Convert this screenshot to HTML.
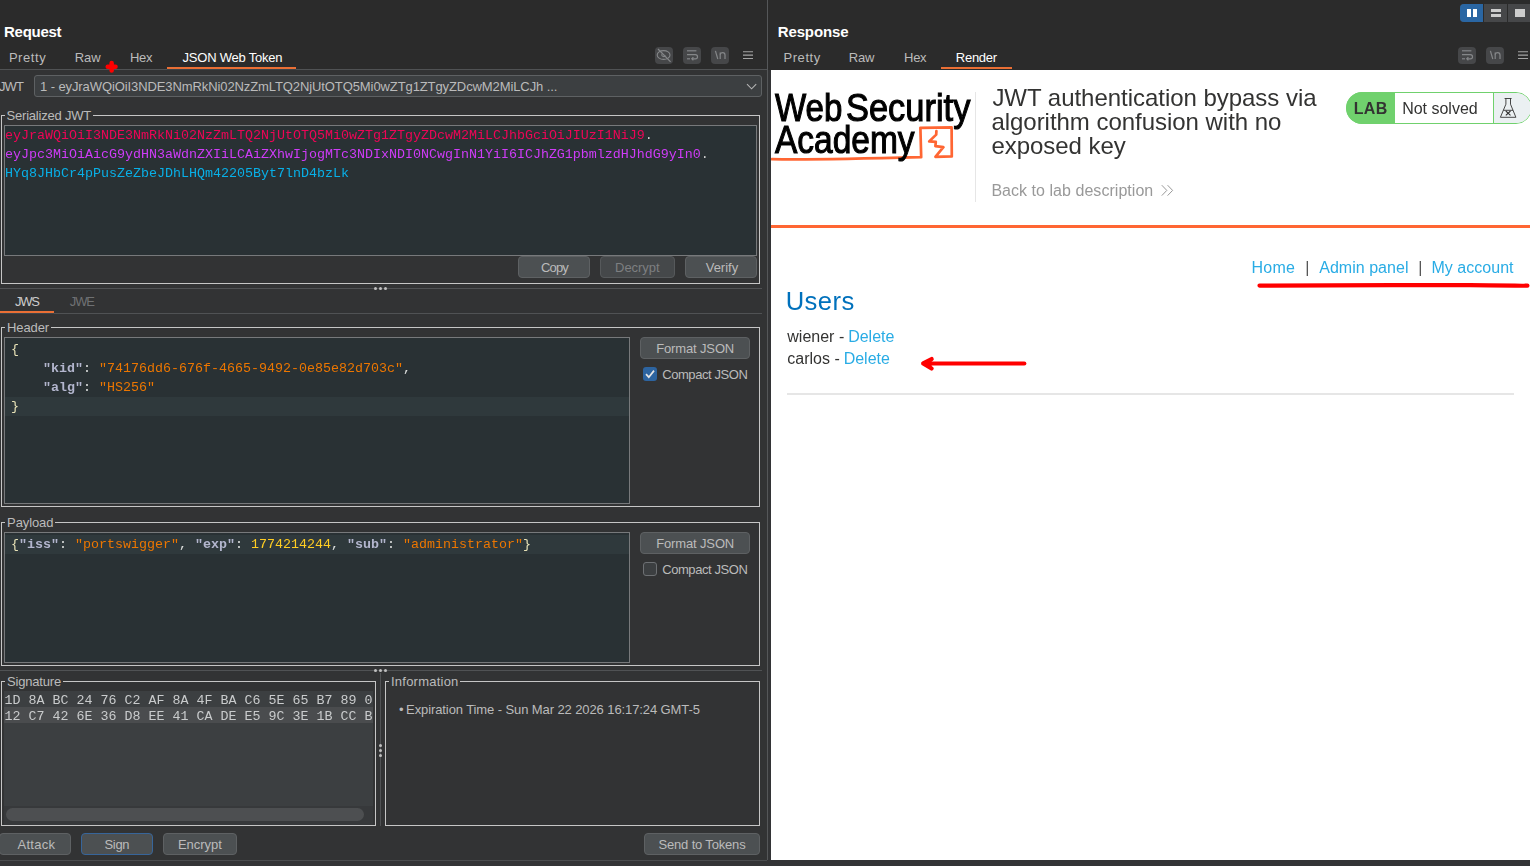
<!DOCTYPE html>
<html><head><meta charset="utf-8"><title>Burp</title>
<style>html,body{margin:0;padding:0;background:#2b2b2b;}body{width:1530px;height:866px;position:relative;overflow:hidden;font-family:"Liberation Sans",sans-serif;}</style></head>
<body>
<div style="position:absolute;left:0px;top:0px;width:1530px;height:866px;box-sizing:border-box;background:#2b2b2b;"></div>
<div style="position:absolute;left:0px;top:70px;width:767px;height:796px;box-sizing:border-box;background:#323334;"></div>
<div style="position:absolute;left:768px;top:70px;width:3px;height:790px;box-sizing:border-box;background:#333436;"></div>
<div style="position:absolute;left:0px;top:69px;width:767px;height:1px;box-sizing:border-box;background:#505254;"></div>
<div style="position:absolute;left:767px;top:0px;width:1px;height:860px;box-sizing:border-box;background:#555759;"></div>
<div style="position:absolute;left:0px;top:860px;width:1530px;height:6px;box-sizing:border-box;background:#333436;"></div>
<div style="position:absolute;left:0px;top:860px;width:767px;height:1px;box-sizing:border-box;background:#4a4c4e;"></div>
<div style="position:absolute;left:167px;top:67px;width:129px;height:2px;box-sizing:border-box;background:#ea6f35;"></div>
<div style="position:absolute;left:167px;top:69px;width:129px;height:1px;box-sizing:border-box;background:#3e4449;"></div>
<svg style="position:absolute;left:100px;top:56px" width="24" height="22" viewBox="100 56 24 22"><path d="M111.65 62.9 V70.5 M107.7 66.65 H115.5" stroke="#ff0000" stroke-width="4.5" stroke-linecap="round" fill="none"/></svg>
<div style="position:absolute;left:655px;top:47px;width:18px;height:17px;box-sizing:border-box;background:#464749;border-radius:4px;"></div>
<div style="position:absolute;left:683px;top:47px;width:18px;height:17px;box-sizing:border-box;background:#464749;border-radius:4px;"></div>
<div style="position:absolute;left:711px;top:47px;width:18px;height:17px;box-sizing:border-box;background:#464749;border-radius:4px;"></div>
<svg style="position:absolute;left:655px;top:47px" width="18" height="17" viewBox="0 0 18 17"><g fill="none" stroke="#858789" stroke-width="1.1"><ellipse cx="8.6" cy="8" rx="6.4" ry="4.4"/><path d="M6.6 7.2 C6.6 9.8 9.6 10.2 10.4 8.6"/><path d="M3 2 L15.6 14.8" stroke-width="1.2"/></g></svg>
<svg style="position:absolute;left:683px;top:47px" width="18" height="17" viewBox="0 0 18 17"><g fill="none" stroke="#858789" stroke-width="1.2"><path d="M4 3.8 H13.4"/><path d="M4 7.6 H12.4 C15.2 7.6 15.2 11.8 12.4 11.8 H9"/><path d="M10.4 10.3 L8.8 11.8 L10.4 13.3"/><path d="M4 11.8 H7"/></g></svg>
<svg style="position:absolute;left:711px;top:47px" width="18" height="17" viewBox="0 0 18 17"><g fill="none" stroke="#858789" stroke-width="1.2"><path d="M4.4 3.8 L6.8 12"/><path d="M9.2 12 V5.6"/><path d="M9.2 7.6 C9.6 5.2 14 4.8 14 8 V12"/></g></svg>
<svg style="position:absolute;left:741px;top:48px" width="14" height="14" viewBox="741 48 14 14"><path d="M743 51.7 H753 M743 55.1 H753 M743 58.5 H753" stroke="#a4a4a4" stroke-width="1.15" fill="none"/></svg>
<div style="position:absolute;left:34px;top:75px;width:728px;height:22px;box-sizing:border-box;background:#3c3f41;border:1px solid #5e6163;border-radius:3px;"></div>
<svg style="position:absolute;left:745px;top:82px" width="14" height="10" viewBox="0 0 14 10"><path d="M2 2.2 L6.6 6.8 L11.2 2.2" stroke="#b4b4b4" stroke-width="1.1" fill="none"/></svg>
<div style="position:absolute;left:1px;top:115px;width:1px;height:169px;box-sizing:border-box;background:#c6c6c6;"></div><div style="position:absolute;left:759px;top:115px;width:1px;height:169px;box-sizing:border-box;background:#c6c6c6;"></div><div style="position:absolute;left:1px;top:283px;width:759px;height:1px;box-sizing:border-box;background:#c6c6c6;"></div><div style="position:absolute;left:1px;top:115px;width:4px;height:1px;box-sizing:border-box;background:#c6c6c6;"></div><div style="position:absolute;left:93px;top:115px;width:667px;height:1px;box-sizing:border-box;background:#c6c6c6;"></div>
<div style="position:absolute;left:4px;top:125px;width:753px;height:131px;box-sizing:border-box;background:#293134;border:1px solid #77797b;"></div>
<div style="position:absolute;left:518px;top:256px;width:72px;height:22px;box-sizing:border-box;background:#4c5052;border:1px solid #5e6163;border-radius:4px;"></div>
<div style="position:absolute;left:600px;top:256px;width:75px;height:22px;box-sizing:border-box;background:#45484a;border:1px solid #56595b;border-radius:4px;"></div>
<div style="position:absolute;left:685px;top:256px;width:72px;height:22px;box-sizing:border-box;background:#4c5052;border:1px solid #5e6163;border-radius:4px;"></div>
<div style="position:absolute;left:0px;top:288px;width:762px;height:1px;box-sizing:border-box;background:#505254;"></div>
<div style="position:absolute;left:374.0px;top:287.0px;width:3px;height:3px;box-sizing:border-box;background:#c0c0c0;border-radius:2px;"></div><div style="position:absolute;left:379.0px;top:287.0px;width:3px;height:3px;box-sizing:border-box;background:#c0c0c0;border-radius:2px;"></div><div style="position:absolute;left:384.0px;top:287.0px;width:3px;height:3px;box-sizing:border-box;background:#c0c0c0;border-radius:2px;"></div>
<div style="position:absolute;left:0px;top:313px;width:762px;height:1px;box-sizing:border-box;background:#505254;"></div>
<div style="position:absolute;left:0px;top:311px;width:54px;height:2px;box-sizing:border-box;background:#ea6f35;"></div>
<div style="position:absolute;left:0px;top:313px;width:54px;height:1px;box-sizing:border-box;background:#3e4449;"></div>
<div style="position:absolute;left:1px;top:327px;width:1px;height:180px;box-sizing:border-box;background:#c6c6c6;"></div><div style="position:absolute;left:759px;top:327px;width:1px;height:180px;box-sizing:border-box;background:#c6c6c6;"></div><div style="position:absolute;left:1px;top:506px;width:759px;height:1px;box-sizing:border-box;background:#c6c6c6;"></div><div style="position:absolute;left:1px;top:327px;width:4px;height:1px;box-sizing:border-box;background:#c6c6c6;"></div><div style="position:absolute;left:51px;top:327px;width:709px;height:1px;box-sizing:border-box;background:#c6c6c6;"></div>
<div style="position:absolute;left:4px;top:337px;width:626px;height:167px;box-sizing:border-box;background:#293134;border:1px solid #77797b;"></div>
<div style="position:absolute;left:5px;top:397px;width:624px;height:19px;box-sizing:border-box;background:#2f393c;"></div>
<div style="position:absolute;left:640px;top:337px;width:110px;height:22px;box-sizing:border-box;background:#4c5052;border:1px solid #5e6163;border-radius:4px;"></div>
<div style="position:absolute;left:643px;top:367px;width:14px;height:14px;box-sizing:border-box;background:#2d64a0;border-radius:3px;"></div>
<svg style="position:absolute;left:643px;top:367px" width="14" height="14" viewBox="0 0 14 14"><path d="M3 7.2 L5.8 10.2 L11 3.6" stroke="#e6e6e6" stroke-width="1.7" fill="none"/></svg>
<div style="position:absolute;left:1px;top:522px;width:1px;height:144px;box-sizing:border-box;background:#c6c6c6;"></div><div style="position:absolute;left:759px;top:522px;width:1px;height:144px;box-sizing:border-box;background:#c6c6c6;"></div><div style="position:absolute;left:1px;top:665px;width:759px;height:1px;box-sizing:border-box;background:#c6c6c6;"></div><div style="position:absolute;left:1px;top:522px;width:4px;height:1px;box-sizing:border-box;background:#c6c6c6;"></div><div style="position:absolute;left:55px;top:522px;width:705px;height:1px;box-sizing:border-box;background:#c6c6c6;"></div>
<div style="position:absolute;left:4px;top:532px;width:626px;height:131px;box-sizing:border-box;background:#293134;border:1px solid #77797b;"></div>
<div style="position:absolute;left:5px;top:535px;width:624px;height:19px;box-sizing:border-box;background:#2f393c;"></div>
<div style="position:absolute;left:640px;top:532px;width:110px;height:22px;box-sizing:border-box;background:#4c5052;border:1px solid #5e6163;border-radius:4px;"></div>
<div style="position:absolute;left:643px;top:562px;width:14px;height:14px;box-sizing:border-box;background:#3c3f41;border:1px solid #6d7073;border-radius:3px;"></div>
<div style="position:absolute;left:0px;top:670px;width:762px;height:1px;box-sizing:border-box;background:#505254;"></div>
<div style="position:absolute;left:374.0px;top:669.0px;width:3px;height:3px;box-sizing:border-box;background:#c0c0c0;border-radius:2px;"></div><div style="position:absolute;left:379.0px;top:669.0px;width:3px;height:3px;box-sizing:border-box;background:#c0c0c0;border-radius:2px;"></div><div style="position:absolute;left:384.0px;top:669.0px;width:3px;height:3px;box-sizing:border-box;background:#c0c0c0;border-radius:2px;"></div>
<div style="position:absolute;left:380px;top:673px;width:1px;height:153px;box-sizing:border-box;background:#505254;"></div>
<div style="position:absolute;left:379.0px;top:743.8px;width:3px;height:3px;box-sizing:border-box;background:#c0c0c0;border-radius:2px;"></div><div style="position:absolute;left:379.0px;top:748.8px;width:3px;height:3px;box-sizing:border-box;background:#c0c0c0;border-radius:2px;"></div><div style="position:absolute;left:379.0px;top:753.8px;width:3px;height:3px;box-sizing:border-box;background:#c0c0c0;border-radius:2px;"></div>
<div style="position:absolute;left:1px;top:681px;width:1px;height:145px;box-sizing:border-box;background:#c6c6c6;"></div><div style="position:absolute;left:375px;top:681px;width:1px;height:145px;box-sizing:border-box;background:#c6c6c6;"></div><div style="position:absolute;left:1px;top:825px;width:375px;height:1px;box-sizing:border-box;background:#c6c6c6;"></div><div style="position:absolute;left:1px;top:681px;width:4px;height:1px;box-sizing:border-box;background:#c6c6c6;"></div><div style="position:absolute;left:63px;top:681px;width:313px;height:1px;box-sizing:border-box;background:#c6c6c6;"></div>
<div style="position:absolute;left:4px;top:691px;width:369px;height:115px;box-sizing:border-box;background:#3c3f41;"></div>
<div style="position:absolute;left:4px;top:707px;width:369px;height:16px;box-sizing:border-box;background:#4a4c4e;"></div>
<div style="position:absolute;left:4px;top:806px;width:369px;height:19px;box-sizing:border-box;background:#37393b;"></div>
<div style="position:absolute;left:6px;top:808px;width:358px;height:13px;box-sizing:border-box;background:#4d4f51;border-radius:7px;"></div>
<div style="position:absolute;left:385px;top:681px;width:1px;height:145px;box-sizing:border-box;background:#c6c6c6;"></div><div style="position:absolute;left:759px;top:681px;width:1px;height:145px;box-sizing:border-box;background:#c6c6c6;"></div><div style="position:absolute;left:385px;top:825px;width:375px;height:1px;box-sizing:border-box;background:#c6c6c6;"></div><div style="position:absolute;left:385px;top:681px;width:4px;height:1px;box-sizing:border-box;background:#c6c6c6;"></div><div style="position:absolute;left:460px;top:681px;width:300px;height:1px;box-sizing:border-box;background:#c6c6c6;"></div>
<div style="position:absolute;left:-1px;top:833px;width:72px;height:22px;box-sizing:border-box;background:#4c5052;border:1px solid #5e6163;border-radius:4px;"></div>
<div style="position:absolute;left:81px;top:833px;width:72px;height:22px;box-sizing:border-box;background:#4c5052;border:1px solid #37659a;border-radius:4px;"></div>
<div style="position:absolute;left:163px;top:833px;width:74px;height:22px;box-sizing:border-box;background:#4c5052;border:1px solid #5e6163;border-radius:4px;"></div>
<div style="position:absolute;left:644px;top:833px;width:116px;height:22px;box-sizing:border-box;background:#4c5052;border:1px solid #5e6163;border-radius:4px;"></div>
<div style="position:absolute;left:771px;top:70px;width:759px;height:790px;box-sizing:border-box;background:#ffffff;"></div>
<div style="position:absolute;left:1460px;top:4px;width:70px;height:18px;box-sizing:border-box;background:#464749;border-radius:4px;border-top-right-radius:0;border-bottom-right-radius:0;"></div>
<div style="position:absolute;left:1460px;top:4px;width:23px;height:18px;box-sizing:border-box;background:#2a66a3;border-radius:4px;border-top-right-radius:0;border-bottom-right-radius:0;"></div>
<div style="position:absolute;left:1483px;top:4px;width:1px;height:18px;box-sizing:border-box;background:#2b2b2b;"></div>
<div style="position:absolute;left:1507px;top:4px;width:1px;height:18px;box-sizing:border-box;background:#2b2b2b;"></div>
<div style="position:absolute;left:1467px;top:9px;width:4px;height:8px;box-sizing:border-box;background:#fff;"></div>
<div style="position:absolute;left:1473px;top:9px;width:4px;height:8px;box-sizing:border-box;background:#fff;"></div>
<div style="position:absolute;left:1491px;top:9px;width:10px;height:3px;box-sizing:border-box;background:#cdcdcd;"></div>
<div style="position:absolute;left:1491px;top:14px;width:10px;height:3px;box-sizing:border-box;background:#cdcdcd;"></div>
<div style="position:absolute;left:1515px;top:9px;width:10px;height:8px;box-sizing:border-box;background:#cdcdcd;"></div>
<div style="position:absolute;left:1458px;top:47px;width:18px;height:17px;box-sizing:border-box;background:#464749;border-radius:4px;"></div>
<div style="position:absolute;left:1486px;top:47px;width:18px;height:17px;box-sizing:border-box;background:#464749;border-radius:4px;"></div>
<svg style="position:absolute;left:1458px;top:47px" width="18" height="17" viewBox="0 0 18 17"><g fill="none" stroke="#858789" stroke-width="1.2"><path d="M4 3.8 H13.4"/><path d="M4 7.6 H12.4 C15.2 7.6 15.2 11.8 12.4 11.8 H9"/><path d="M10.4 10.3 L8.8 11.8 L10.4 13.3"/><path d="M4 11.8 H7"/></g></svg>
<svg style="position:absolute;left:1486px;top:47px" width="18" height="17" viewBox="0 0 18 17"><g fill="none" stroke="#858789" stroke-width="1.2"><path d="M4.4 3.8 L6.8 12"/><path d="M9.2 12 V5.6"/><path d="M9.2 7.6 C9.6 5.2 14 4.8 14 8 V12"/></g></svg>
<svg style="position:absolute;left:1516px;top:48px" width="14" height="14" viewBox="1516 48 14 14"><path d="M1518 51.7 H1528 M1518 55.1 H1528 M1518 58.5 H1528" stroke="#a4a4a4" stroke-width="1.15" fill="none"/></svg>
<div style="position:absolute;left:941px;top:67px;width:71px;height:2px;box-sizing:border-box;background:#ea6f35;"></div>
<div style="position:absolute;left:975px;top:92px;width:1px;height:110px;box-sizing:border-box;background:#e6e6e6;"></div>
<div style="position:absolute;left:1346px;top:92px;width:186px;height:32px;box-sizing:border-box;background:#ffffff;border:1px solid #70d16d;border-radius:16px;"></div>
<div style="position:absolute;left:1346px;top:92px;width:49px;height:32px;box-sizing:border-box;background:#70d16d;border-radius:16px 0 0 16px;"></div>
<div style="position:absolute;left:1493px;top:93px;width:38px;height:30px;box-sizing:border-box;background:#ebf0f2;border-radius:0 15px 15px 0;border-left:1px solid #70d16d;"></div>
<svg style="position:absolute;left:1498px;top:96px" width="20" height="24" viewBox="0 0 20 24"><g fill="none" stroke="#333" stroke-width="0.9"><path d="M6.6 2.5 H13.6 M7.9 2.5 V8.2 L2.4 21.3 H17.9 L12.5 8.2 V2.5"/><path d="M5.4 14.3 H15"/><path d="M7.8 15 L12.5 19.4 M12.5 15 L7.8 19.4" stroke-width="1.1"/></g></svg>
<div style="position:absolute;left:771px;top:225px;width:759px;height:3px;box-sizing:border-box;background:#ff6633;"></div>
<svg style="position:absolute;left:1160px;top:184px" width="16" height="13" viewBox="0 0 16 13"><path d="M1.8 1.2 L6.8 6.4 L1.8 11.6 M7.6 1.2 L12.6 6.4 L7.6 11.6" stroke="#999" stroke-width="1" fill="none"/></svg>
<svg style="position:absolute;left:1250px;top:278px" width="280" height="14" viewBox="1250 278 280 14"><path d="M1259.5 285.6 C1300 285.2 1400 284.8 1470 285.2 S1515 286 1527.4 285.6" stroke="#ff0000" stroke-width="4.2" stroke-linecap="round" fill="none"/></svg>
<svg style="position:absolute;left:915px;top:350px" width="120" height="26" viewBox="915 350 120 26"><path d="M926 363.5 L1024.3 363.5" stroke="#ff0000" stroke-width="4.2" stroke-linecap="round" fill="none"/><path d="M931.6 359.1 L923.2 363.5 L931.6 368.5" fill="#ff0000" stroke="#ff0000" stroke-width="4.3" stroke-linejoin="round" stroke-linecap="round"/></svg>
<div style="position:absolute;left:787px;top:393px;width:727px;height:2px;box-sizing:border-box;background:#e6e6e6;"></div>
<span style="position:absolute;left:4.0px;top:23.3px;white-space:pre;line-height:18.000px;font-family:'Liberation Sans', sans-serif;font-size:15px;font-weight:bold;letter-spacing:-0.267px;color:#ffffff;">Request</span>
<span style="position:absolute;left:8.9px;top:50px;white-space:pre;line-height:15.600px;font-family:'Liberation Sans', sans-serif;font-size:13px;font-weight:normal;letter-spacing:0.56px;color:#bbbbbb;">Pretty</span>
<span style="position:absolute;left:74.8px;top:50px;white-space:pre;line-height:15.600px;font-family:'Liberation Sans', sans-serif;font-size:13px;font-weight:normal;letter-spacing:-0.1px;color:#bbbbbb;">Raw</span>
<span style="position:absolute;left:129.9px;top:50px;white-space:pre;line-height:15.600px;font-family:'Liberation Sans', sans-serif;font-size:13px;font-weight:normal;letter-spacing:-0.2px;color:#bbbbbb;">Hex</span>
<span style="position:absolute;left:182.5px;top:50px;white-space:pre;line-height:15.600px;font-family:'Liberation Sans', sans-serif;font-size:13px;font-weight:normal;letter-spacing:-0.215px;color:#ffffff;">JSON Web Token</span>
<span style="position:absolute;left:-1.1px;top:78.7px;white-space:pre;line-height:15.600px;font-family:'Liberation Sans', sans-serif;font-size:13px;font-weight:normal;letter-spacing:-0.9px;color:#bbbbbb;">JWT</span>
<span style="position:absolute;left:40.0px;top:78.7px;white-space:pre;line-height:15.600px;font-family:'Liberation Sans', sans-serif;font-size:13px;font-weight:normal;letter-spacing:-0.096px;color:#bbbbbb;">1 - eyJraWQiOiI3NDE3NmRkNi02NzZmLTQ2NjUtOTQ5Mi0wZTg1ZTgyZDcwM2MiLCJh ...</span>
<span style="position:absolute;left:6.5px;top:108px;white-space:pre;line-height:15.600px;font-family:'Liberation Sans', sans-serif;font-size:13px;font-weight:normal;letter-spacing:-0.2px;color:#bbbbbb;">Serialized JWT</span>
<span style="position:absolute;left:541.1px;top:260px;white-space:pre;line-height:15.600px;font-family:'Liberation Sans', sans-serif;font-size:13px;font-weight:normal;letter-spacing:-0.867px;color:#bbbbbb;">Copy</span>
<span style="position:absolute;left:615.1px;top:260px;white-space:pre;line-height:15.600px;font-family:'Liberation Sans', sans-serif;font-size:13px;font-weight:normal;letter-spacing:-0.05px;color:#7d7f81;">Decrypt</span>
<span style="position:absolute;left:705.7px;top:260px;white-space:pre;line-height:15.600px;font-family:'Liberation Sans', sans-serif;font-size:13px;font-weight:normal;letter-spacing:0.0px;color:#bbbbbb;">Verify</span>
<span style="position:absolute;left:14.9px;top:293.8px;white-space:pre;line-height:15.600px;font-family:'Liberation Sans', sans-serif;font-size:13px;font-weight:normal;letter-spacing:-1.2px;color:#cdcdcd;">JWS</span>
<span style="position:absolute;left:69.8px;top:293.8px;white-space:pre;line-height:15.600px;font-family:'Liberation Sans', sans-serif;font-size:13px;font-weight:normal;letter-spacing:-1.15px;color:#6f7173;">JWE</span>
<span style="position:absolute;left:7.1px;top:319.5px;white-space:pre;line-height:15.600px;font-family:'Liberation Sans', sans-serif;font-size:13px;font-weight:normal;letter-spacing:-0.12px;color:#bbbbbb;">Header</span>
<span style="position:absolute;left:656.2px;top:341.1px;white-space:pre;line-height:15.600px;font-family:'Liberation Sans', sans-serif;font-size:13px;font-weight:normal;letter-spacing:-0.14px;color:#bbbbbb;">Format JSON</span>
<span style="position:absolute;left:662.2px;top:367.4px;white-space:pre;line-height:15.600px;font-family:'Liberation Sans', sans-serif;font-size:13px;font-weight:normal;letter-spacing:-0.427px;color:#bbbbbb;">Compact JSON</span>
<span style="position:absolute;left:7.1px;top:514.9px;white-space:pre;line-height:15.600px;font-family:'Liberation Sans', sans-serif;font-size:13px;font-weight:normal;letter-spacing:-0.1px;color:#bbbbbb;">Payload</span>
<span style="position:absolute;left:656.2px;top:536.1px;white-space:pre;line-height:15.600px;font-family:'Liberation Sans', sans-serif;font-size:13px;font-weight:normal;letter-spacing:-0.14px;color:#bbbbbb;">Format JSON</span>
<span style="position:absolute;left:662.2px;top:562.4px;white-space:pre;line-height:15.600px;font-family:'Liberation Sans', sans-serif;font-size:13px;font-weight:normal;letter-spacing:-0.427px;color:#bbbbbb;">Compact JSON</span>
<span style="position:absolute;left:7.1px;top:673.7px;white-space:pre;line-height:15.600px;font-family:'Liberation Sans', sans-serif;font-size:13px;font-weight:normal;letter-spacing:-0.2px;color:#bbbbbb;">Signature</span>
<span style="position:absolute;left:391.0px;top:673.7px;white-space:pre;line-height:15.600px;font-family:'Liberation Sans', sans-serif;font-size:13px;font-weight:normal;letter-spacing:0.23px;color:#bbbbbb;">Information</span>
<span style="position:absolute;left:399.1px;top:701.7px;white-space:pre;line-height:15.600px;font-family:'Liberation Sans', sans-serif;font-size:13px;font-weight:normal;letter-spacing:0px;color:#bbbbbb;">•</span>
<span style="position:absolute;left:406.1px;top:701.7px;white-space:pre;line-height:15.600px;font-family:'Liberation Sans', sans-serif;font-size:13px;font-weight:normal;letter-spacing:-0.098px;color:#bbbbbb;">Expiration Time - Sun Mar 22 2026 16:17:24 GMT-5</span>
<span style="position:absolute;left:17.5px;top:836.8px;white-space:pre;line-height:15.600px;font-family:'Liberation Sans', sans-serif;font-size:13px;font-weight:normal;letter-spacing:0.28px;color:#bbbbbb;">Attack</span>
<span style="position:absolute;left:104.5px;top:836.8px;white-space:pre;line-height:15.600px;font-family:'Liberation Sans', sans-serif;font-size:13px;font-weight:normal;letter-spacing:-0.333px;color:#bbbbbb;">Sign</span>
<span style="position:absolute;left:177.9px;top:836.8px;white-space:pre;line-height:15.600px;font-family:'Liberation Sans', sans-serif;font-size:13px;font-weight:normal;letter-spacing:0.0px;color:#bbbbbb;">Encrypt</span>
<span style="position:absolute;left:658.5px;top:836.8px;white-space:pre;line-height:15.600px;font-family:'Liberation Sans', sans-serif;font-size:13px;font-weight:normal;letter-spacing:-0.169px;color:#bbbbbb;">Send to Tokens</span>
<span style="position:absolute;left:777.7px;top:23.1px;white-space:pre;line-height:18.000px;font-family:'Liberation Sans', sans-serif;font-size:15px;font-weight:bold;letter-spacing:-0.114px;color:#ffffff;">Response</span>
<span style="position:absolute;left:783.5px;top:49.8px;white-space:pre;line-height:15.600px;font-family:'Liberation Sans', sans-serif;font-size:13px;font-weight:normal;letter-spacing:0.56px;color:#bbbbbb;">Pretty</span>
<span style="position:absolute;left:848.7px;top:49.8px;white-space:pre;line-height:15.600px;font-family:'Liberation Sans', sans-serif;font-size:13px;font-weight:normal;letter-spacing:-0.15px;color:#bbbbbb;">Raw</span>
<span style="position:absolute;left:904.0px;top:49.8px;white-space:pre;line-height:15.600px;font-family:'Liberation Sans', sans-serif;font-size:13px;font-weight:normal;letter-spacing:-0.25px;color:#bbbbbb;">Hex</span>
<span style="position:absolute;left:955.8px;top:49.8px;white-space:pre;line-height:15.600px;font-family:'Liberation Sans', sans-serif;font-size:13px;font-weight:normal;letter-spacing:-0.26px;color:#ffffff;">Render</span>
<div style="position:absolute;left:0;top:0;width:1530px;height:866px;will-change:transform"><svg style="position:absolute;left:771px;top:85px" width="205" height="85" viewBox="771 85 205 85">
<path d="M771.8 159.2 C810 160 860 158.8 921.2 157.2 L920.4 127.8 L951.6 127.4 L951.8 156.4 L935.4 156.8 L943.4 147.2 L935.4 146.2 L935.8 141.8 L929.2 141.4 L936.2 134.6 L936.4 131.2" fill="none" stroke="#ff6633" stroke-width="2.7" stroke-linejoin="round" stroke-linecap="round"/>
<g font-family="Liberation Sans, sans-serif" font-size="38.6" fill="#000" stroke="#000" stroke-width="1.1">
<text x="775" y="120.6" textLength="67.4" lengthAdjust="spacingAndGlyphs">Web</text><text x="846" y="120.6" textLength="124.4" lengthAdjust="spacingAndGlyphs">Security</text>
<text x="775" y="153" textLength="139.6" lengthAdjust="spacingAndGlyphs">Academy</text></g>
</svg><span style="position:absolute;left:992.4px;top:83.7px;white-space:pre;line-height:28.800px;font-family:'Liberation Sans', sans-serif;font-size:24px;font-weight:normal;letter-spacing:-0.032px;color:#333332;">JWT authentication bypass via</span><span style="position:absolute;left:991.4px;top:107.5px;white-space:pre;line-height:28.800px;font-family:'Liberation Sans', sans-serif;font-size:24px;font-weight:normal;letter-spacing:-0.032px;color:#333332;">algorithm confusion with no</span><span style="position:absolute;left:991.4px;top:131.6px;white-space:pre;line-height:28.800px;font-family:'Liberation Sans', sans-serif;font-size:24px;font-weight:normal;letter-spacing:-0.032px;color:#333332;">exposed key</span><span style="position:absolute;left:991.4px;top:180.8px;white-space:pre;line-height:19.200px;font-family:'Liberation Sans', sans-serif;font-size:16px;font-weight:normal;letter-spacing:0.041px;color:#999999;">Back to lab description</span><span style="position:absolute;left:1353.8px;top:98.8px;white-space:pre;line-height:19.200px;font-family:'Liberation Sans', sans-serif;font-size:16px;font-weight:bold;letter-spacing:0.3px;color:#333332;">LAB</span><span style="position:absolute;left:1402.2px;top:98.8px;white-space:pre;line-height:19.200px;font-family:'Liberation Sans', sans-serif;font-size:16px;font-weight:normal;letter-spacing:-0.011px;color:#333332;">Not solved</span><span style="position:absolute;left:1251.5px;top:257.8px;white-space:pre;line-height:19.200px;font-family:'Liberation Sans', sans-serif;font-size:16px;font-weight:normal;letter-spacing:0.267px;color:#29ace5;">Home</span><span style="position:absolute;left:1305.2px;top:257.8px;white-space:pre;line-height:19.200px;font-family:'Liberation Sans', sans-serif;font-size:16px;font-weight:normal;letter-spacing:0px;color:#555555;">|</span><span style="position:absolute;left:1319.2px;top:257.8px;white-space:pre;line-height:19.200px;font-family:'Liberation Sans', sans-serif;font-size:16px;font-weight:normal;letter-spacing:0.03px;color:#29ace5;">Admin panel</span><span style="position:absolute;left:1418.2px;top:257.8px;white-space:pre;line-height:19.200px;font-family:'Liberation Sans', sans-serif;font-size:16px;font-weight:normal;letter-spacing:0px;color:#555555;">|</span><span style="position:absolute;left:1431.5px;top:257.8px;white-space:pre;line-height:19.200px;font-family:'Liberation Sans', sans-serif;font-size:16px;font-weight:normal;letter-spacing:0.022px;color:#29ace5;">My account</span><span style="position:absolute;left:785.7px;top:285.8px;white-space:pre;line-height:30.720px;font-family:'Liberation Sans', sans-serif;font-size:25.6px;font-weight:normal;letter-spacing:0.425px;color:#0071bc;">Users</span><span style="position:absolute;left:787.3px;top:326.8px;white-space:pre;line-height:19.200px;font-family:'Liberation Sans', sans-serif;font-size:16px;font-weight:normal;letter-spacing:0px;color:#333332;">wiener - </span><span style="position:absolute;left:848.2px;top:326.8px;white-space:pre;line-height:19.200px;font-family:'Liberation Sans', sans-serif;font-size:16px;font-weight:normal;letter-spacing:-0.02px;color:#29ace5;">Delete</span><span style="position:absolute;left:787.3px;top:349.3px;white-space:pre;line-height:19.200px;font-family:'Liberation Sans', sans-serif;font-size:16px;font-weight:normal;letter-spacing:0px;color:#333332;">carlos - </span><span style="position:absolute;left:843.7px;top:349.3px;white-space:pre;line-height:19.200px;font-family:'Liberation Sans', sans-serif;font-size:16px;font-weight:normal;letter-spacing:-0.02px;color:#29ace5;">Delete</span></div>
<div style="font-family:'Liberation Mono',monospace;font-size:13.333px;line-height:19px;white-space:pre;position:absolute;left:5px;top:126px;"><span style="color:#ee0556">eyJraWQiOiI3NDE3NmRkNi02NzZmLTQ2NjUtOTQ5Mi0wZTg1ZTgyZDcwM2MiLCJhbGciOiJIUzI1NiJ9</span><span style="color:#d0d0d0">.</span>
<span style="color:#cf3cf8">eyJpc3MiOiAicG9ydHN3aWdnZXIiLCAiZXhwIjogMTc3NDIxNDI0NCwgInN1YiI6ICJhZG1pbmlzdHJhdG9yIn0</span><span style="color:#d0d0d0">.</span>
<span style="color:#08b0e8">HYq8JHbCr4pPusZeZbeJDhLHQm42205Byt7lnD4bzLk</span></div>
<div style="font-family:'Liberation Mono',monospace;font-size:13.333px;line-height:19px;white-space:pre;position:absolute;left:11px;top:340px;"><span style="color:#e8e2b7">{</span>
    <span style="color:#b3b6ce;font-weight:bold">"kid"</span><span style="color:#dfe1e0">:</span> <span style="color:#ec7600">"74176dd6-676f-4665-9492-0e85e82d703c"</span><span style="color:#dfe1e0">,</span>
    <span style="color:#b3b6ce;font-weight:bold">"alg"</span><span style="color:#dfe1e0">:</span> <span style="color:#ec7600">"HS256"</span>
<span style="color:#e8e2b7">}</span></div>
<div style="font-family:'Liberation Mono',monospace;font-size:13.333px;line-height:19px;white-space:pre;position:absolute;left:11px;top:535px;"><span style="color:#e8e2b7">{</span><span style="color:#b3b6ce;font-weight:bold">"iss"</span><span style="color:#dfe1e0">:</span> <span style="color:#ec7600">"portswigger"</span><span style="color:#dfe1e0">,</span> <span style="color:#b3b6ce;font-weight:bold">"exp"</span><span style="color:#dfe1e0">:</span> <span style="color:#ffcd22">1774214244</span><span style="color:#dfe1e0">,</span> <span style="color:#b3b6ce;font-weight:bold">"sub"</span><span style="color:#dfe1e0">:</span> <span style="color:#ec7600">"administrator"</span><span style="color:#e8e2b7">}</span></div>
<div style="font-family:'Liberation Mono',monospace;font-size:13.333px;line-height:19px;white-space:pre;position:absolute;left:4.5px;top:693px;width:368px;overflow:hidden;height:16px;line-height:16px;color:#c9cbcc;">1D 8A BC 24 76 C2 AF 8A 4F BA C6 5E 65 B7 89 0E</div>
<div style="font-family:'Liberation Mono',monospace;font-size:13.333px;line-height:19px;white-space:pre;position:absolute;left:4.5px;top:709px;width:368px;overflow:hidden;height:16px;line-height:16px;color:#c9cbcc;">12 C7 42 6E 36 D8 EE 41 CA DE E5 9C 3E 1B CC BE</div>
</body></html>
